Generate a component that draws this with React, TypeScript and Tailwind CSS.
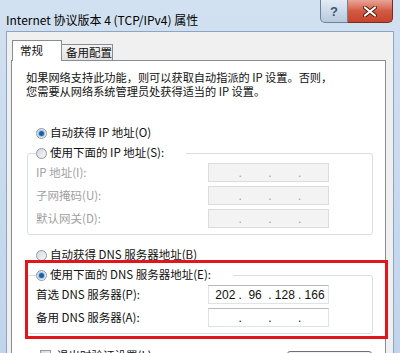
import { Fragment } from "react"

const cjk = "font-['Noto_Sans_CJK_SC',sans-serif]"

function Radio({ checked }: { checked?: boolean }) {
  return (
    <span className="flex h-[11px] w-[11px] shrink-0 items-center justify-center rounded-full border border-[#8f9aa6] bg-gradient-to-br from-[#d3d7dc] to-[#f8f8f8]">
      {checked && <span className="h-[5px] w-[5px] rounded-full bg-[#1d5ea3] shadow-[0_0_0_1px_#9cc6ec]" />}
    </span>
  )
}

function IpBox({ values, disabled }: { values?: string[]; disabled?: boolean }) {
  const v = values ?? ["", "", "", ""]
  return (
    <div
      className={`flex h-[19px] w-[121px] items-center border pl-[3px] font-['Liberation_Sans',sans-serif] text-[12px] leading-none ${
        disabled ? "border-[#dcdcdc] bg-[#f3f3f3] text-[#a0a0a0]" : "border-[#dfe3e8] border-t-[#b5b8bd] bg-white text-[#111]"
      }`}
    >
      {v.map((n, i) => (
        <Fragment key={i}>
          <span className="w-[27px] text-center">{n}</span>
          {i < 3 && <span className="flex w-[3px] justify-center">.</span>}
        </Fragment>
      ))}
    </div>
  )
}

function Row({ label, disabled, values }: { label: string; disabled?: boolean; values?: string[] }) {
  return (
    <div className="flex h-[19px] items-center">
      <span className={`w-[172px] whitespace-nowrap ${disabled ? "text-[#a0a0a0]" : "text-[#111]"}`}>{label}</span>
      <IpBox values={values} disabled={disabled} />
    </div>
  )
}

function Group({ legend, checked, children }: { legend: string; checked?: boolean; children: React.ReactNode }) {
  return (
    <fieldset className="ml-[1px] w-[346px] rounded-[3px] border border-[#d5dfe5] pb-[6px] pl-[8px]">
      <legend className="pr-[22px]">
        <div className="flex h-[20px] items-center gap-[3px] whitespace-nowrap">
          <Radio checked={checked} />
          <span>{legend}</span>
        </div>
      </legend>
      <div className="flex flex-col gap-[4px]">{children}</div>
    </fieldset>
  )
}

export default function App() {
  return (
    <div className={`relative flex h-[353px] w-[400px] flex-col overflow-hidden bg-gradient-to-b from-[#d2e1f1] to-[#c0d4eb] ${cjk} text-[11.5px] text-[#111]`}>
      {/* Title bar */}
      <div className="flex h-[31px] shrink-0 items-start">
        <span className="pl-[6px] pt-[12px] text-[12px] leading-[16px] text-black whitespace-nowrap">
          Internet 协议版本 4 (TCP/IPv4) 属性
        </span>
        <div className="ml-auto mr-[7px] flex">
          <div className="flex h-[23px] w-[28px] items-center justify-center rounded-bl-[5px] border border-t-0 border-[#6f8299] bg-gradient-to-b from-[#e2ebf5] to-[#b7c9de]">
            <span className="font-['Liberation_Sans',sans-serif] text-[13px] font-bold leading-none text-[#3f5570]">?</span>
          </div>
          <div className="flex h-[23px] w-[45px] items-center justify-center rounded-br-[5px] border border-l-0 border-t-0 border-[#7a2a1e] bg-gradient-to-b from-[#e8a597] via-[#d25a43] to-[#c7432b]">
            <svg width="14" height="11" viewBox="0 0 14 11">
              <path d="M2 1.5 L12 9.5 M12 1.5 L2 9.5" stroke="#5a1c12" strokeWidth="4" strokeLinecap="round" />
              <path d="M2 1.5 L12 9.5 M12 1.5 L2 9.5" stroke="#ffffff" strokeWidth="2.2" strokeLinecap="round" />
            </svg>
          </div>
        </div>
      </div>

      {/* Client area */}
      <div className="ml-[6px] mr-[6px] flex flex-1 flex-col border border-b-0 border-[#8ea5c2] bg-[#f0f0f0] pl-[4px] pr-[7px] pt-[8px]">
        {/* Tabs */}
        <div className="flex h-[20px] items-end">
          <div className="relative z-10 -mb-[1px] ml-[1px] flex h-[21px] w-[50px] items-center border border-b-0 border-[#898c95] bg-white pl-[7px]">
            常规
          </div>
          <div className="flex h-[16px] w-[51px] items-center border border-b-0 border-l-0 border-[#898c95] bg-gradient-to-b from-[#f4f4f4] to-[#e1e1e1] pl-[4px] whitespace-nowrap">
            备用配置
          </div>
        </div>

        {/* Tab page */}
        <div className="flex-1 border border-[#898c95] bg-white pl-[14px]">
          <p className="mt-[9px] text-[11.2px] leading-[14px]">
            <span className="block whitespace-nowrap">如果网络支持此功能，则可以获取自动指派的 IP 设置。否则，</span>
            <span className="block whitespace-nowrap">您需要从网络系统管理员处获得适当的 IP 设置。</span>
          </p>

          <div className="ml-[10px] mt-[25px] flex h-[20px] items-center gap-[3px]">
            <Radio checked />
            <span>自动获得 IP 地址(O)</span>
          </div>

          <Group legend="使用下面的 IP 地址(S):">
            <Row label="IP 地址(I):" disabled />
            <Row label="子网掩码(U):" disabled />
            <Row label="默认网关(D):" disabled />
          </Group>

          <div className="ml-[10px] mt-[10px] flex h-[20px] items-center gap-[3px]">
            <Radio />
            <span>自动获得 DNS 服务器地址(B)</span>
          </div>

          <Group legend="使用下面的 DNS 服务器地址(E):" checked>
            <Row label="首选 DNS 服务器(P):" values={["202", "96", "128", "166"]} />
            <Row label="备用 DNS 服务器(A):" />
          </Group>

          <div className="mt-[10px] flex items-start">
            <div className="ml-[14px] mt-[3px] flex items-center gap-[6px]">
              <span className="h-[11px] w-[11px] border border-[#8f9aa6] bg-gradient-to-br from-[#d3d7dc] to-[#f8f8f8]" />
              <span>退出时验证设置(L)</span>
            </div>
            <div className="ml-auto mr-[13px] mt-[7px] flex h-[23px] w-[85px] items-center justify-center rounded-[3px] border border-[#707070] bg-gradient-to-b from-[#f2f2f2] to-[#dddddd]">
              高级(V)...
            </div>
          </div>
        </div>
      </div>

      {/* Highlight */}
      <div className="pointer-events-none absolute left-[25px] top-[260px] h-[79px] w-[363px] border-[3px] border-[#e1161d]" />
    </div>
  )
}
